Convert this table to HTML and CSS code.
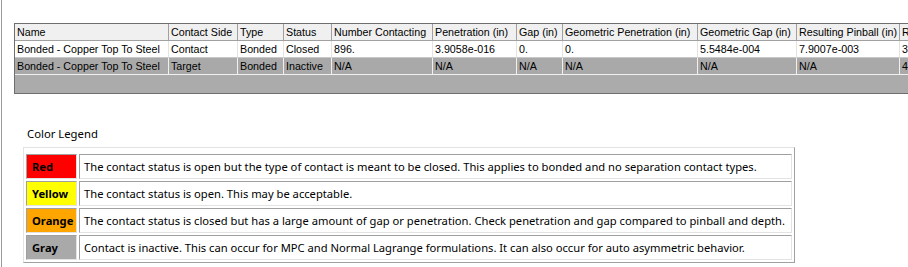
FILE: index.html
```html
<!DOCTYPE html>
<html>
<head>
<meta charset="utf-8">
<link rel="stylesheet" href="styles.css">
</head>
<body>
<div class="frame">
  <div class="grid">
    <div class="row head">
      <div class="cell">Name</div>
      <div class="cell">Contact Side</div>
      <div class="cell">Type</div>
      <div class="cell">Status</div>
      <div class="cell">Number Contacting</div>
      <div class="cell">Penetration (in)</div>
      <div class="cell">Gap (in)</div>
      <div class="cell">Geometric Penetration (in)</div>
      <div class="cell">Geometric Gap (in)</div>
      <div class="cell">Resulting Pinball (in)</div>
      <div class="cell">R</div>
    </div>
    <div class="row closed">
      <div class="cell">Bonded - Copper Top To Steel</div>
      <div class="cell">Contact</div>
      <div class="cell">Bonded</div>
      <div class="cell">Closed</div>
      <div class="cell">896.</div>
      <div class="cell">3.9058e-016</div>
      <div class="cell">0.</div>
      <div class="cell">0.</div>
      <div class="cell">5.5484e-004</div>
      <div class="cell">7.9007e-003</div>
      <div class="cell">3</div>
    </div>
    <div class="row inactive">
      <div class="cell">Bonded - Copper Top To Steel</div>
      <div class="cell">Target</div>
      <div class="cell">Bonded</div>
      <div class="cell">Inactive</div>
      <div class="cell">N/A</div>
      <div class="cell">N/A</div>
      <div class="cell">N/A</div>
      <div class="cell">N/A</div>
      <div class="cell">N/A</div>
      <div class="cell">N/A</div>
      <div class="cell">4</div>
    </div>
  </div>

  <div class="legend-title">Color Legend</div>
  <div class="legend">
    <div class="swatch red">Red</div>
    <div class="desc">The contact status is open but the type of contact is meant to be closed. This applies to bonded and no separation contact types.</div>
    <div class="swatch yellow">Yellow</div>
    <div class="desc">The contact status is open. This may be acceptable.</div>
    <div class="swatch orange">Orange</div>
    <div class="desc">The contact status is closed but has a large amount of gap or penetration. Check penetration and gap compared to pinball and depth.</div>
    <div class="swatch gray">Gray</div>
    <div class="desc">Contact is inactive. This can occur for MPC and Normal Lagrange formulations. It can also occur for auto asymmetric behavior.</div>
  </div>
</div>
</body>
</html>
```
FILE: styles.css
```css
html, body {
  margin: 0;
  padding: 0;
  background: #ffffff;
  overflow: hidden;
  width: 908px;
  height: 267px;
}

.frame {
  margin-left: 1px;
  border-left: 1px solid #9a9a9a;
  height: 267px;
  box-sizing: border-box;
  padding-top: 23px;
}

.grid {
  margin-left: 12px;
  width: 1020px;
  height: 71px;
  box-sizing: border-box;
  border: 1px solid #6e6e6e;
  background: #ababab;
  font-family: "Liberation Sans", Arial, sans-serif;
  font-size: 10.7px;
  color: #000000;
}

.row {
  display: grid;
  grid-template-columns: 154px 69px 46px 48px 101px 84px 46px 135px 99px 103px 120px;
  height: 17px;
}

.cell {
  box-sizing: border-box;
  height: 17px;
  line-height: 16px;
  padding-left: 2px;
  white-space: nowrap;
  overflow: hidden;
  border-right: 1px solid #a0a0a0;
  border-bottom: 1px solid #a0a0a0;
}

.head .cell {
  background: #f0f0f0;
  border-right-color: #a0a0a0;
  border-bottom-color: #a0a0a0;
}

.closed .cell {
  background: #ffffff;
  border-right-color: #e3e3e3;
  border-bottom-color: #c8c8c8;
}

.inactive .cell {
  background: #a9a9a9;
  border-right-color: #f0f0f0;
  border-bottom-color: #f0f0f0;
}

.legend-title {
  margin: 32px 0 0 25px;
  font-family: "Noto Sans", sans-serif;
  font-size: 11.3px;
  line-height: 15px;
  color: #000000;
}

.legend {
  margin: 6px 0 0 21px;
  width: 772px;
  box-sizing: border-box;
  display: grid;
  grid-template-columns: 51px 713px;
  grid-auto-rows: 25px;
  gap: 2px;
  padding: 6px 2px 2px 2px;
  border: 1px solid;
  border-color: #e3e3e3 #a0a0a0 #a0a0a0 #e3e3e3;
  font-family: "Noto Sans", sans-serif;
  font-size: 11.2px;
  color: #000000;
}

.swatch, .desc {
  box-sizing: border-box;
  display: flex;
  align-items: center;
  border: 1px solid;
  border-color: #a0a0a0 #e3e3e3 #e3e3e3 #a0a0a0;
  white-space: nowrap;
}

.swatch {
  font-weight: 700;
  padding-left: 5px;
}

.desc {
  padding-left: 4px;
  background: #ffffff;
}

.red { background: #ff0000; }
.yellow { background: #ffff00; }
.orange { background: #ffa500; }
.gray { background: #a9a9a9; }
```
